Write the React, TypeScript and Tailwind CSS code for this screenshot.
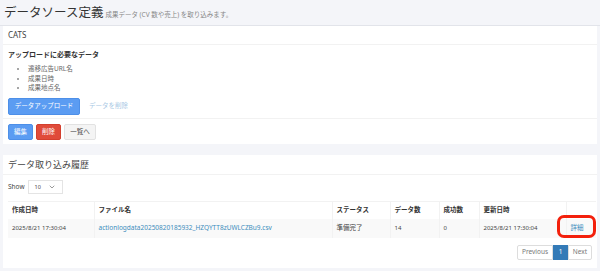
import { ChevronDown } from 'lucide-react'

const font = { fontFamily: '"Noto Sans", "Noto Sans CJK JP", sans-serif' }

const columns = [
  { label: '作成日時', w: 'w-[86px]' },
  { label: 'ファイル名', w: 'w-[238px]' },
  { label: 'ステータス', w: 'w-[58px]' },
  { label: 'データ数', w: 'w-[49px]' },
  { label: '成功数', w: 'w-[40px]' },
  { label: '更新日時', w: 'w-[87px]' },
  { label: '', w: 'w-[30px]' },
]

export default function App() {
  return (
    <div
      className="relative w-[600px] h-[271px] overflow-hidden bg-[#f4f5f9] text-[#333]"
      style={font}
    >
      {/* Page header */}
      <div className="h-[26px] border-b border-[#e2e4ea] flex items-end pb-[6px] px-[4px] gap-[2px]">
        <h1 className="text-[12.5px] leading-none text-[#333]">データソース定義</h1>
        <span className="text-[6.5px] leading-none text-[#888] mb-[1px]">成果データ (CV 数や売上) を取り込みます。</span>
      </div>

      {/* Source card */}
      <div className="mx-[3px] bg-white h-[118px] flex flex-col">
        <div className="h-[19px] border-b border-[#f2f2f2] flex items-center px-[5px] text-[8px] text-[#444]">
          CATS
        </div>
        <div className="px-[5px] pt-[5px] h-[74px] border-b border-[#f2f2f2]">
          <p className="text-[7px] font-bold leading-[10px] text-[#333]">アップロードに必要なデータ</p>
          <ul className="mt-[4px] pl-[20px] list-disc text-[6.5px] leading-[9.5px] text-[#666] marker:text-[#888]">
            <li>遷移広告URL名</li>
            <li>成果日時</li>
            <li>成果地点名</li>
          </ul>
          <div className="mt-[5px] flex items-center gap-[9px]">
            <button className="h-[17px] w-[72px] rounded-[2px] bg-[#5b9cf2] border border-[#4d8fe8] text-white text-[6.5px]">
              データアップロード
            </button>
            <span className="text-[6.5px] text-[#a9c8e4]">データを削除</span>
          </div>
        </div>
        <div className="flex items-center gap-[3px] px-[5px] pt-[5px]">
          <button className="h-[16px] w-[25px] rounded-[2px] bg-[#5b9cf2] border border-[#4d8fe8] text-white text-[6.5px]">
            編集
          </button>
          <button className="h-[16px] w-[25px] rounded-[2px] bg-[#e04b3a] border border-[#d33f2e] text-white text-[6.5px]">
            削除
          </button>
          <button className="h-[16px] w-[32px] rounded-[2px] bg-[#f4f4f4] border border-[#e2e2e2] text-[#444] text-[6.5px]">
            一覧へ
          </button>
        </div>
      </div>

      {/* History card */}
      <div className="mx-[3px] mt-[11px] bg-white h-[113px] flex flex-col">
        <div className="h-[20px] border-b border-[#f2f2f2] flex items-center px-[5px] text-[9px] text-[#444]">
          データ取り込み履歴
        </div>
        <div className="px-[5px] pt-[5px]">
          <div className="flex items-center gap-[3px] text-[6.5px] text-[#444]">
            <span>Show</span>
            <div className="h-[14px] w-[35px] border border-[#e4e4e4] flex items-center justify-between px-[6px]">
              <span className="text-[5.5px]">10</span>
              <ChevronDown className="w-[8px] h-[8px] text-[#666]" strokeWidth={2} />
            </div>
          </div>

          <table className="mt-[7px] w-[588px] table-fixed border-collapse text-[6.5px]">
            <thead>
              <tr className="h-[17px] border-t border-[#f2f2f2]">
                {columns.map((c, i) => (
                  <th
                    key={i}
                    className={`${c.w} ${i > 0 ? 'border-l' : ''} border-[#f2f2f2] text-left font-bold pl-[4px] text-[#333]`}
                  >
                    {c.label}
                  </th>
                ))}
              </tr>
            </thead>
            <tbody>
              <tr className="h-[19px] bg-[#f9f9f9] text-[#444]">
                <td className="pl-[4px] text-[6px]">2025/8/21 17:30:04</td>
                <td className="pl-[4px] border-l border-[#f2f2f2] text-[#3c8dbc] whitespace-nowrap">
                  actionlogdata20250820185932_HZQYTT8zUWLCZBu9.csv
                </td>
                <td className="pl-[4px] border-l border-[#f2f2f2]">準備完了</td>
                <td className="pl-[4px] border-l border-[#f2f2f2] text-[6px]">14</td>
                <td className="pl-[4px] border-l border-[#f2f2f2] text-[6px]">0</td>
                <td className="pl-[4px] border-l border-[#f2f2f2] text-[6px]">2025/8/21 17:30:04</td>
                <td className="pl-[4px] border-l border-[#f2f2f2] text-[#3c8dbc]">詳細</td>
              </tr>
            </tbody>
          </table>

          <div className="mt-[7px] flex justify-end">
            <div className="flex h-[15px] text-[6.5px]">
              <span className="w-[36px] flex items-center justify-center border border-[#ddd] rounded-l-[2px] text-[#777]">
                Previous
              </span>
              <span className="w-[15px] flex items-center justify-center bg-[#337ab7] border border-[#337ab7] text-white">
                1
              </span>
              <span className="w-[24px] flex items-center justify-center border border-[#ddd] rounded-r-[2px] text-[#777]">
                Next
              </span>
            </div>
          </div>
        </div>
      </div>

      {/* Annotation */}
      <div className="absolute left-[557px] top-[215px] w-[39px] h-[23px] border-[3px] border-[#f3200c] rounded-[7px]" />
    </div>
  )
}
